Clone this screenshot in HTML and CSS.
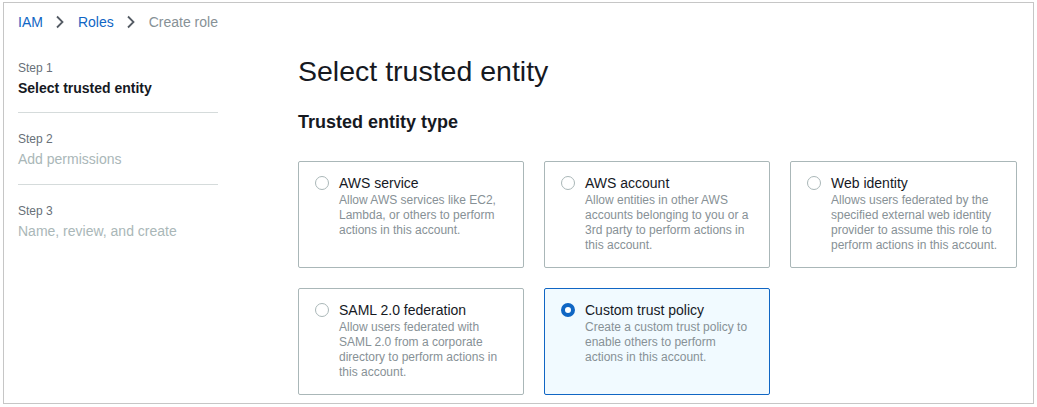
FILE: index.html
```html
<!DOCTYPE html>
<html>
<head>
<meta charset="utf-8">
<link rel="stylesheet" href="styles.css">
</head>
<body>
<div class="frame">
  <nav class="crumbs">
    <a class="crumb link">IAM</a>
    <svg class="chev" width="10" height="14" viewBox="0 0 10 14"><path d="M2 1.5 L7.5 7 L2 12.5" fill="none" stroke="#545b64" stroke-width="1.8"/></svg>
    <a class="crumb link">Roles</a>
    <svg class="chev" width="10" height="14" viewBox="0 0 10 14"><path d="M2 1.5 L7.5 7 L2 12.5" fill="none" stroke="#545b64" stroke-width="1.8"/></svg>
    <span class="crumb current">Create role</span>
  </nav>
  <div class="layout">
    <aside class="steps">
      <div class="step">
        <div class="step-num">Step 1</div>
        <div class="step-name active">Select trusted entity</div>
      </div>
      <div class="step mid">
        <div class="step-num">Step 2</div>
        <div class="step-name">Add permissions</div>
      </div>
      <div class="step last">
        <div class="step-num">Step 3</div>
        <div class="step-name">Name, review, and create</div>
      </div>
    </aside>
    <main class="main">
      <h1 class="title">Select trusted entity</h1>
      <h2 class="subtitle">Trusted entity type</h2>
      <div class="cards">
        <div class="card">
          <span class="radio"></span>
          <div class="card-body">
            <div class="card-title">AWS service</div>
            <div class="card-desc">Allow AWS services like EC2, Lambda, or others to perform actions in this account.</div>
          </div>
        </div>
        <div class="card">
          <span class="radio"></span>
          <div class="card-body">
            <div class="card-title">AWS account</div>
            <div class="card-desc">Allow entities in other AWS accounts belonging to you or a 3rd party to perform actions in this account.</div>
          </div>
        </div>
        <div class="card">
          <span class="radio"></span>
          <div class="card-body">
            <div class="card-title">Web identity</div>
            <div class="card-desc">Allows users federated by the specified external web identity provider to assume this role to perform actions in this account.</div>
          </div>
        </div>
        <div class="card">
          <span class="radio"></span>
          <div class="card-body">
            <div class="card-title">SAML 2.0 federation</div>
            <div class="card-desc">Allow users federated with SAML 2.0 from a corporate directory to perform actions in this account.</div>
          </div>
        </div>
        <div class="card selected">
          <span class="radio checked"></span>
          <div class="card-body">
            <div class="card-title">Custom trust policy</div>
            <div class="card-desc">Create a custom trust policy to enable others to perform actions in this account.</div>
          </div>
        </div>
      </div>
    </main>
  </div>
</div>
</body>
</html>
```
FILE: styles.css
```css
* { box-sizing: border-box; }
html, body { margin: 0; padding: 0; background: #fff; }
body {
  font-family: "Liberation Sans", Arial, sans-serif;
  color: #16191f;
  padding: 2px 3px 0 3px;
}
.frame {
  width: 1031px;
  height: 402px;
  border: 1px solid #c6c6c6;
  overflow: hidden;
  padding: 10px 0 0 14px;
}
.crumbs {
  display: flex;
  align-items: center;
  height: 18px;
  font-size: 14px;
}
.crumb.link { color: #1066c4; }
.crumb.current { color: #879196; }
.chev { margin: 0 13px 0 12px; }
.layout {
  display: flex;
  margin-top: 29px;
}
.steps {
  width: 200px;
  flex: none;
}
.step {
  border-bottom: 1px solid #d5dbdb;
  padding-bottom: 15px;
  margin-bottom: 18px;
}
.step.mid { padding-bottom: 16px; }
.step.last { border-bottom: none; }
.step-num {
  font-size: 12px;
  color: #687078;
  line-height: 16px;
}
.step-name {
  font-size: 14px;
  line-height: 18px;
  margin-top: 3px;
  color: #aab7b8;
}
.step-name.active {
  color: #16191f;
  font-weight: bold;
}
.main {
  margin-left: 80px;
  flex: none;
  width: 720px;
}
.title {
  margin: -6px 0 0 0;
  font-size: 28.5px;
  font-weight: normal;
  line-height: 34px;
  color: #16191f;
}
.subtitle {
  margin: 23px 0 0 0;
  font-size: 18px;
  font-weight: bold;
  line-height: 22px;
}
.cards {
  margin-top: 28px;
  display: grid;
  grid-template-columns: 226px 226px 227px;
  grid-auto-rows: 107px;
  column-gap: 20px;
  row-gap: 20px;
}
.card {
  border: 1px solid #aab7b8;
  border-radius: 2px;
  display: flex;
  padding: 12px 14px 0 16px;
}
.card.selected {
  background: #f1faff;
  border-color: #1066c4;
}
.radio {
  flex: none;
  width: 14px;
  height: 14px;
  border: 1px solid #aab7b8;
  border-radius: 50%;
  margin-top: 2px;
  margin-right: 10px;
  background: #fff;
}
.radio.checked {
  border: 4px solid #1066c4;
}
.card-title {
  font-size: 14px;
  line-height: 18px;
  color: #16191f;
}
.card-desc {
  font-size: 12px;
  line-height: 15px;
  color: #879196;
  margin-top: 1px;
}
```
